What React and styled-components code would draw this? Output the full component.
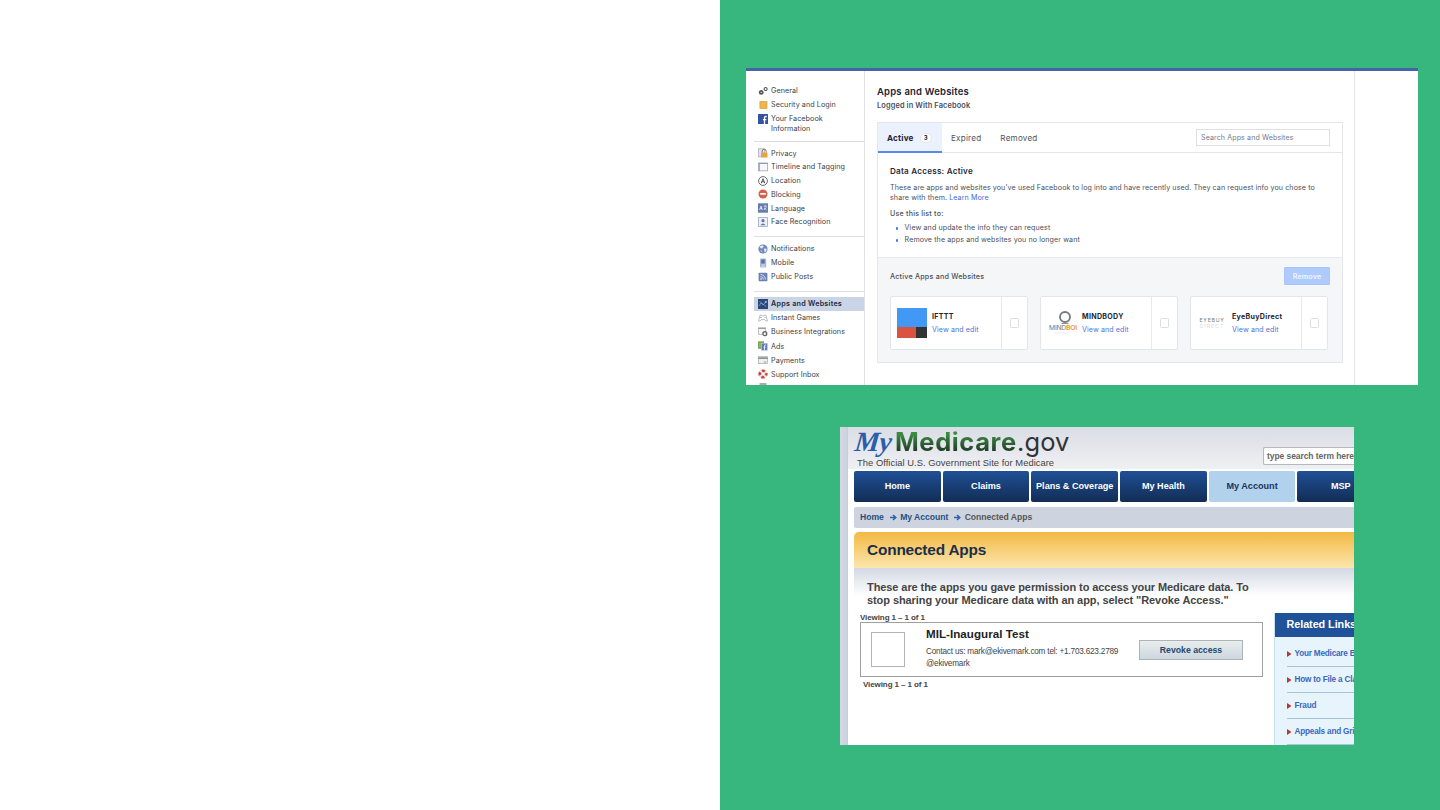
import React from 'react';
import styled, { createGlobalStyle, css } from 'styled-components';

const Global = createGlobalStyle`
  *, *::before, *::after { box-sizing: border-box; }
  body { margin: 0; background: #fff; }
`;

const Slide = styled.main`
  display: grid;
  grid-template-columns: 720px 720px;
  height: 810px;
  overflow: hidden;
`;
const Blank = styled.section`background: #fff;`;
const Showcase = styled.section`
  background: #37b67e;
  padding-top: 68px;
  display: flex;
  flex-direction: column;
  gap: 42px;
`;

/* Social network settings */
const Settings = styled.article`
  width: 672px;
  height: 317px;
  margin-left: 26px;
  background: #fff;
  border-top: 3.5px solid #4463a8;
  display: grid;
  grid-template-columns: 119px 490px 1fr;
  overflow: hidden;
  font-family: Inter, sans-serif;
  color: #3a3f49;
`;
const Sidebar = styled.nav`
  padding: 13px 0 0 8px;
  border-right: 1px solid #e0e1e5;
  height: 314px;
  overflow: hidden;
`;
const Group = styled.ul`
  list-style: none;
  margin: 0;
  padding: 0 0 ${p => p.$after || 0}px;
  & + & { border-top: 1px solid #dcdee2; padding-top: ${p => p.$before || 5}px; }
`;
const Item = styled.li`
  display: flex;
  align-items: flex-start;
  gap: 3px;
  height: ${p => p.$h || 14}px;
  padding-left: 4px;
  font-size: 7.2px;
  line-height: 14px;
  letter-spacing: ${p => (p.$on ? 0.24 : 0.06)}px;
  white-space: pre-line;
  font-weight: ${p => (p.$on ? 600 : 400)};
  background: ${p => (p.$on ? '#c9d4e7' : 'transparent')};
  color: ${p => (p.$on ? '#1d2939' : '#3a3f49')};
  svg { width: 10px; height: 10px; flex: none; margin-top: 1.5px; }
`;
const ItemLabel = styled.span`
  line-height: ${p => (p.$two ? 10 : 14)}px;
  padding-top: ${p => (p.$two ? 2 : 0)}px;
`;
const Content = styled.div`
  border-right: 1px solid #e4e5e9;
  padding: 14px 11px 0 12px;
`;
const Title = styled.h1`
  margin: 0;
  font-size: 9.5px;
  line-height: 14px;
  font-weight: 600;
  letter-spacing: 0.2px;
  color: #1d2233;
`;
const Subtitle = styled.p`
  margin: 0 0 10px;
  font-size: 7.4px;
  line-height: 13px;
  font-weight: 600;
  letter-spacing: 0.12px;
  color: #4b4f5c;
`;
const Card = styled.section`
  width: 466px;
  height: 241px;
  border: 1px solid #e4e6ea;
  display: flex;
  flex-direction: column;
`;
const Tabs = styled.header`
  display: flex;
  align-items: center;
  height: 30px;
  border-bottom: 1px solid #e4e6ea;
  padding-right: 12px;
`;
const Tab = styled.div`
  display: flex;
  align-items: center;
  gap: 6px;
  height: 30px;
  font-size: 8.1px;
  color: #50545f;
  margin-left: ${p => p.$ml || 0}px;
  letter-spacing: 0.22px;
  ${p => p.$on && css`
    width: 64px;
    padding: 2px 0 0 9px;
    background: #ebf1fe;
    border-bottom: 2px solid #5b8ae6;
    font-weight: 700;
    color: #1d2233;
  `}
`;
const Count = styled.span`
  width: 12px;
  height: 10px;
  border-radius: 5px;
  background: #fff;
  border: 1px solid #e6e6e6;
  font-size: 6px;
  line-height: 8px;
  text-align: center;
  letter-spacing: 0;
`;
const Search = styled.div`
  width: 134px;
  height: 17px;
  margin-left: auto;
  border: 1px solid #dedfe3;
  padding-left: 4px;
  font-size: 7.1px;
  line-height: 15px;
  letter-spacing: 0.1px;
  color: #747b87;
`;
const Access = styled.div`
  height: 104px;
  padding: 12px 12px 0;
  font-size: 7.1px;
  letter-spacing: 0.1px;
  color: #4b4f5a;
`;
const AccessTitle = styled.h2`
  margin: 0 0 6px;
  font-size: 8.1px;
  line-height: 12px;
  font-weight: 600;
  letter-spacing: 0.24px;
  color: #252936;
`;
const Copy = styled.p`
  margin: 0 0 ${p => p.$after}px;
  line-height: 10px;
  white-space: nowrap;
  font-weight: ${p => p.$w || 400};
  letter-spacing: ${p => p.$ls}px;
`;
const Link = styled.a`color: #426bd8;`;
const Bullets = styled.ul`
  margin: 0;
  padding: 0 0 0 14.5px;
  list-style: none;
  line-height: 12.4px;
`;
const Bullet = styled.li`
  display: flex;
  align-items: center;
  &::before {
    content: '';
    width: 2.6px; height: 2.6px;
    border-radius: 1px;
    background: #4377e8;
    margin: 0 6.5px 0 -9px;
  }
`;
const Active = styled.div`
  flex: 1;
  background: #f5f6f8;
  border-top: 1px solid #e6e8ec;
  padding: 9px 12px 0;
`;
const ActiveHead = styled.div`
  display: flex;
  justify-content: space-between;
  align-items: center;
  height: 18px;
  font-size: 7.2px;
  font-weight: 500;
  letter-spacing: 0.19px;
  color: #4b4f5a;
`;
const Remove = styled.button`
  width: 46px;
  height: 18px;
  padding: 0;
  border: 1px solid #a9c5fb;
  border-radius: 1px;
  background: #afcafc;
  color: #f0f5ff;
  font: 600 7.2px Inter, sans-serif;
  letter-spacing: 0.1px;
`;
const Apps = styled.div`
  display: flex;
  gap: 12px;
  margin-top: 11px;
`;
const AppCard = styled.div`
  width: 138px;
  height: 54px;
  border: 1px solid #e3e5e9;
  border-radius: 2px;
  background: #fff;
  display: grid;
  grid-template-columns: 41px 69px 1fr;
`;
const Logo = styled.div`
  padding: 11px 0 0 6px;
  overflow: hidden;
  svg { display: block; }
`;
const AppText = styled.div`
  padding-top: 14px;
  font-size: 7.1px;
  line-height: 12.5px;
  letter-spacing: 0.1px;
  color: #4c74d8;
`;
const AppName = styled.div`
  font-weight: 700;
  color: #252833;
  letter-spacing: 0.3px;
`;
const Tick = styled.div`
  border-left: 1px solid #e8e9ed;
  padding: 21px 0 0 8px;
  &::before {
    content: '';
    display: block;
    width: 9px; height: 10px;
    border: 1px solid #dcdee2;
    border-radius: 1.5px;
  }
`;

/* Medicare page */
const Medicare = styled.article`
  width: 514px;
  height: 318px;
  margin-left: 120px;
  padding-left: 8px;
  background: linear-gradient(90deg, #d3d8e2 0, #cdd3df 6px, #c5cbd9 8px, #fff 8px);
  overflow: hidden;
  font-family: "Liberation Sans", Arial, sans-serif;
  color: #444;
`;
const Banner = styled.header`
  display: flex;
  justify-content: space-between;
  height: 42px;
  padding-left: 7px;
  background: linear-gradient(#dadde4, #eff0f4);
`;
const Brand = styled.div`white-space: nowrap;`;
const Wordmark = styled.div`
  display: flex;
  height: 29px;
  line-height: 30px;
  font-family: Inter, sans-serif;
  font-size: 25.5px;
`;
const My = styled.span`
  width: 40px;
  font-family: "Liberation Serif", serif;
  font-style: italic;
  font-weight: 700;
  font-size: 28px;
  letter-spacing: -0.5px;
  color: #2a5ea8;
  transform: skewX(-6deg);
`;
const Green = styled.span`
  width: 122px;
  font-weight: 700;
  letter-spacing: 0.6px;
  background: linear-gradient(#3d8a42 25%, #213a28 85%);
  background-clip: text;
  color: transparent;
`;
const Gov = styled.span`color: #333; letter-spacing: 0.1px;`;
const Tagline = styled.div`
  padding-left: 2px;
  font-size: 9.4px;
  line-height: 13px;
  letter-spacing: 0.03px;
`;
const Query = styled.div`
  width: 91px;
  height: 18px;
  margin-top: 20px;
  border: 1px solid #b6b8bd;
  border-right: 0;
  border-radius: 2px 0 0 2px;
  background: #fff;
  padding-left: 3px;
  font: 700 8.5px/16px "Liberation Sans", sans-serif;
  letter-spacing: -0.07px;
  color: #666;
  white-space: nowrap;
`;
const Menu = styled.nav`
  display: flex;
  gap: 2px;
  padding: 2px 0 0 6px;
`;
const MenuItem = styled.div`
  flex: 0 0 86.7px;
  height: 31px;
  border-radius: 2px;
  background: ${p => (p.$on ? '#b2d1ec' : 'linear-gradient(#205096, #122d55)')};
  color: ${p => (p.$on ? '#1a355c' : '#fff')};
  font-size: 9.1px;
  line-height: 31px;
  font-weight: 700;
  text-align: center;
  white-space: nowrap;
`;
const Crumbs = styled.div`
  display: flex;
  align-items: center;
  height: 21px;
  margin: 5px 0 4px 6px;
  padding: 0 0 1px 6px;
  border-radius: 2px 0 0 2px;
  background: #ced4df;
  font-size: 8.6px;
  letter-spacing: -0.03px;
  font-weight: 700;
  color: #555;
  svg { margin: 1px 3.4px 0 6px; }
`;
const Crumb = styled.span`color: #25507f;`;
const Heading = styled.h2`
  margin: 0 0 0 6px;
  height: 36px;
  padding-left: 13px;
  border-radius: 5px 0 0 0;
  background: linear-gradient(#f4b942, #fbe6ae);
  font-size: 15.4px;
  line-height: 36px;
  letter-spacing: -0.18px;
  color: #1a2f4c;
`;
const Columns = styled.div`
  display: flex;
  margin-left: 6px;
  height: 178px;
  background: linear-gradient(#d3d8e3, #fff 28px);
`;
const Left = styled.div`
  width: 419.5px;
  flex: none;
  padding: 13px 0 0 6px;
`;
const Intro = styled.p`
  margin: 0 0 6px 7px;
  font-size: 11px;
  font-weight: 700;
  line-height: 13px;
  white-space: pre;
  letter-spacing: -0.08px;
`;
const Viewing = styled.div`
  font-size: 8px;
  font-weight: 700;
  line-height: 9px;
  letter-spacing: -0.09px;
  margin: ${p => p.$m || 0};
`;
const Entry = styled.div`
  display: flex;
  width: 402.5px;
  height: 55px;
  border: 1px solid #a0a0a0;
`;
const Thumb = styled.div`
  width: 34px;
  height: 35px;
  margin: 9px 21px 0 10px;
  border: 1px solid #b4b4b4;
`;
const Details = styled.div`
  width: 213px;
  padding-top: 4px;
  font-size: 8.2px;
  line-height: 12px;
  letter-spacing: -0.2px;
  white-space: nowrap;
`;
const EntryTitle = styled.h3`
  margin: 0 0 5px;
  font-size: 11.6px;
  line-height: 14px;
  letter-spacing: 0.04px;
  color: #222;
`;
const Revoke = styled.button`
  width: 104px;
  height: 20px;
  margin-top: 17px;
  padding: 0;
  border: 1px solid #adb3b8;
  background: linear-gradient(#e9eeeb, #ccd7e0);
  font: 700 8.7px "Liberation Sans", sans-serif;
  color: #23486d;
`;
const Related = styled.aside`
  flex: 1;
  margin-top: 45px;
  background: #e8f4fb;
  border-left: 1px solid #c8dfee;
  overflow: hidden;
  white-space: nowrap;
`;
const RelatedTitle = styled.h4`
  margin: 0 0 4px -1px;
  height: 24px;
  padding-left: 13px;
  background: #1f5299;
  color: #fff;
  font-size: 10.8px;
  line-height: 23px;
  letter-spacing: -0.05px;
`;
const RelatedLink = styled.div`
  display: flex;
  align-items: center;
  gap: 3px;
  height: 26px;
  margin-left: 12px;
  border-bottom: 1px solid #a9c4da;
  font-size: 8.2px;
  letter-spacing: -0.2px;
  font-weight: 700;
  color: #3a67bd;
  svg { flex: none; }
`;

const icons = {
  gears: <g fill="none" stroke="#555" strokeWidth="1.8"><circle cx="3.2" cy="6.4" r="1.5" /><circle cx="7.6" cy="3" r="1.5" strokeWidth="1.2" /></g>,
  badge: <g><rect x="1.4" y="1" width="8" height="8" rx="1.2" fill="#e9ae42" /><path d="M3 3.2h5M3 5h4M3 7h5" stroke="#f2c46e" strokeWidth=".8" /></g>,
  fb: <g><rect width="10" height="10" rx=".6" fill="#3153a0" /><path d="M8.7 2.5H7.8Q6.5 2.5 6.5 3.8V10M4.9 5.6h3.5" stroke="#fff" strokeWidth="1.3" fill="none" /></g>,
  lock: <g><rect x=".5" y=".8" width="6" height="8" fill="#dfe4ef" stroke="#9aa6c2" strokeWidth=".7" /><path d="M4.2 4.8V3.3a2 2 0 0 1 4 0v1.5" fill="none" stroke="#8a7650" /><rect x="3" y="4.5" width="6.5" height="5" rx=".6" fill="#e8a640" /></g>,
  calendar: <g><rect x=".6" y="1" width="9" height="7.8" fill="#f7f8fc" stroke="#a0a6bd" strokeWidth=".8" /><path d="M.5 1.5h9M1.3 1v8" stroke="#8590b5" strokeWidth=".9" /></g>,
  location: <g fill="none" stroke="#444"><circle cx="5" cy="5" r="4.4" strokeWidth=".8" /><path d="M3.2 7.3 5 2.7l1.8 4.6M3.8 5.8h2.4" strokeWidth=".9" /></g>,
  block: <g><circle cx="5" cy="5" r="4.5" fill="#d7604d" /><rect x="2.3" y="4" width="5.4" height="1.7" fill="#fff" /></g>,
  lang: <g><rect y=".3" width="10" height="9.4" fill="#667bb0" /><path d="M1.5 7 3 3l1.3 4M2 5.7h2M5.8 3h3M7.3 3v1M5.8 7l2.6-2.7M6 4.7 8.7 7" stroke="#fff" strokeWidth=".7" fill="none" /></g>,
  face: <g><rect x=".5" y=".5" width="9" height="9" fill="#edf0f7" stroke="#9aabcf" strokeWidth=".8" /><circle cx="5" cy="3.7" r="1.6" fill="#6279ad" /><path d="M2.3 8.2Q5 4.8 7.7 8.2z" fill="#6279ad" /></g>,
  globe: <g><circle cx="5" cy="5" r="4.6" fill="#6e87bd" /><path d="M1.3 2.4 4.7 1.3 5.8 2.5 4.1 4.5 2.7 4.3zM5.8 4.5l3 .3-.7 2.6-1.5 1.1zM2.2 6l1.8.8.2 1.8z" fill="#dfe7f5" /></g>,
  phone: <g><rect x="2" y=".4" width="6.2" height="9.2" rx="1" fill="#a9b6d1" /><rect x="3.3" y="1.5" width="3.4" height="4" fill="#5472b0" /><path d="M3.4 7h3.4M3.4 8.4h3.4" stroke="#e7ebf3" strokeWidth=".6" /></g>,
  rss: <g><rect x=".6" y=".8" width="8.8" height="8.4" rx=".8" fill="#6c80b4" /><circle cx="3" cy="7" r=".8" fill="#fff" /><path d="M2.4 4.6a3 3 0 0 1 3 3M2.4 2.5a5 5 0 0 1 5 5" fill="none" stroke="#e8ecf6" strokeWidth=".8" /></g>,
  apps: <g><rect width="10" height="10" fill="#2c4778" /><path d="m.8 7 2.3-3 2 2L9 2M1.5 2.5l6.8 5" stroke="#8ea9d4" strokeWidth=".7" fill="none" /><circle cx="7.7" cy="3" r="1" fill="#9dbae9" /></g>,
  games: <g fill="none" stroke="#a1a3a7" strokeWidth=".7"><path d="M2 2.2h1.7l.5.7h1.6l.5-.7H8L9.4 8H8L6.4 6.5H3.6L2 8H.6z" /><path d="M2.2 4.5h1.6M3 3.7v1.6M6.4 4.5h1.4" /></g>,
  business: <g><rect x=".5" y=".8" width="7.2" height="6.7" fill="#f5f6f8" stroke="#aaa" strokeWidth=".7" /><path d="M.5 1.4h7.2" stroke="#8c94a6" /><circle cx="6.8" cy="6.7" r="1.9" fill="#fff" stroke="#666" strokeWidth="1.4" /></g>,
  ads: <g><rect x="0" y=".3" width="6" height="7.5" fill="#7ba55d" /><path d="M1 3h2M1 5h2" stroke="#a9c795" strokeWidth=".8" /><rect x="3.3" y="2.2" width="6.2" height="7.2" fill="#617bb5" stroke="#d5ddec" strokeWidth=".5" /><path d="M8 4H7.3Q6.5 4 6.5 5v4M5.5 6.2h2" fill="none" stroke="#fff" strokeWidth=".8" /></g>,
  card: <g><rect x=".5" y="1.7" width="9" height="6.8" fill="#eef0ef" stroke="#a4a7a6" strokeWidth=".7" /><path d="M.5 3.1h9" stroke="#666" strokeWidth="1.2" /><path d="M5.8 7h2.5" stroke="#96a684" /></g>,
  support: <g fill="none"><circle cx="5" cy="5" r="3.2" stroke="#e6e3e3" strokeWidth="2.8" /><circle cx="5" cy="5" r="3.2" stroke="#cf463c" strokeWidth="2.8" strokeDasharray="3 2.03" strokeDashoffset="1.5" /></g>,
  video: <rect x="1.5" width="7" height="6" fill="#aaa" />,
};
const Icon = ({ name }) => <svg viewBox="0 0 10 10">{icons[name]}</svg>;

const groups = [
  { after: 4.5, items: [['gears', 'General'], ['badge', 'Security and Login'], ['fb', 'Your Facebook\nInformation', 24]] },
  { after: 7, before: 5.5, items: [['lock', 'Privacy'], ['calendar', 'Timeline and Tagging'], ['location', 'Location'], ['block', 'Blocking'], ['lang', 'Language'], ['face', 'Face Recognition']].map(i => [...i, 13.8]) },
  { after: 7, items: [['globe', 'Notifications'], ['phone', 'Mobile'], ['rss', 'Public Posts']] },
  { items: [['apps', 'Apps and Websites'], ['games', 'Instant Games'], ['business', 'Business Integrations'], ['ads', 'Ads'], ['card', 'Payments'], ['support', 'Support Inbox'], ['video', '']].map(i => [...i, 14.1]) },
];

const Ifttt = () => (
  <svg width="30" height="30"><path fill="#4299f5" d="M0 0h30v19H0z" /><path fill="#db5240" d="M0 19h18.5v11H0z" /><path fill="#333" d="M18.5 19H30v11H18.5z" /></svg>
);
const Mindbody = () => (
  <svg width="32" height="30" viewBox="0 0 32 30">
    <circle cx="18" cy="9" r="5" fill="none" stroke="#777b80" strokeWidth="1.9" />
    <path d="M14.5 15.5h7" stroke="#8d9094" strokeWidth="1" />
    <text x="2" y="22" fontFamily="Inter, sans-serif" fontSize="6.8" letterSpacing="-.25" fill="#777">MIND<tspan fill="#eb962f" fontWeight="600">BOI</tspan></text>
    <path d="M7 25h14" stroke="#ddd" strokeWidth=".6" />
  </svg>
);
const EyeBuy = () => (
  <svg width="32" height="30" viewBox="0 0 32 30" fontFamily="Inter, sans-serif" fontSize="5.2">
    <text x="2.5" y="14.3" letterSpacing=".75" fill="#777">EYEBUY</text>
    <text x="2.5" y="19.5" letterSpacing="1" fill="#ddd">DIRECT</text>
  </svg>
);
const apps = [['IFTTT', Ifttt], ['MINDBODY', Mindbody], ['EyeBuyDirect', EyeBuy]];

const Arrow = () => (
  <svg width="7" height="7" viewBox="0 0 7 7"><path d="M0 3.5h5M3 1l2.8 2.5L3 6" fill="none" stroke="#2863ab" strokeWidth="1.5" /></svg>
);

export default function App() {
  return (
    <>
      <Global />
      <Slide>
        <Blank />
        <Showcase>
          <Settings>
            <Sidebar>
              {groups.map((g, n) => (
                <Group key={n} $after={g.after} $before={g.before}>
                  {g.items.map(([icon, label, h]) => (
                    <Item key={icon} $h={h} $on={icon === 'apps'}>
                      <Icon name={icon} />
                      <ItemLabel $two={icon === 'fb'}>{label}</ItemLabel>
                    </Item>
                  ))}
                </Group>
              ))}
            </Sidebar>
            <Content>
              <Title>Apps and Websites</Title>
              <Subtitle>Logged in With Facebook</Subtitle>
              <Card>
                <Tabs>
                  <Tab $on>Active<Count>3</Count></Tab>
                  <Tab $ml={9}>Expired</Tab>
                  <Tab $ml={19}>Removed</Tab>
                  <Search>Search Apps and Websites</Search>
                </Tabs>
                <Access>
                  <AccessTitle>Data Access: Active</AccessTitle>
                  <Copy $after={6} $ls={0.096}>
                    These are apps and websites you've used Facebook to log into and have recently used. They can request info you chose to<br />
                    share with them. <Link>Learn More</Link>
                  </Copy>
                  <Copy $after={3} $w={500} $ls={0.22}>Use this list to:</Copy>
                  <Bullets>
                    <Bullet>View and update the info they can request</Bullet>
                    <Bullet>Remove the apps and websites you no longer want</Bullet>
                  </Bullets>
                </Access>
                <Active>
                  <ActiveHead>Active Apps and Websites<Remove>Remove</Remove></ActiveHead>
                  <Apps>
                    {apps.map(([name, Mark]) => (
                      <AppCard key={name}>
                        <Logo><Mark /></Logo>
                        <AppText><AppName>{name}</AppName>View and edit</AppText>
                        <Tick />
                      </AppCard>
                    ))}
                  </Apps>
                </Active>
              </Card>
            </Content>
          </Settings>

          <Medicare>
            <Banner>
              <Brand>
                <Wordmark><My>My</My><Green>Medicare</Green><Gov>.gov</Gov></Wordmark>
                <Tagline>The Official U.S. Government Site for Medicare</Tagline>
              </Brand>
              <Query>type search term here</Query>
            </Banner>
            <Menu>
              {['Home', 'Claims', 'Plans & Coverage', 'My Health', 'My Account', 'MSP'].map(m => (
                <MenuItem key={m} $on={m === 'My Account'}>{m}</MenuItem>
              ))}
            </Menu>
            <Crumbs>
              <Crumb>Home</Crumb><Arrow /><Crumb>My Account</Crumb><Arrow />Connected Apps
            </Crumbs>
            <Heading>Connected Apps</Heading>
            <Columns>
              <Left>
                <Intro>{'These are the apps you gave permission to access your Medicare data. To\nstop sharing your Medicare data with an app, select "Revoke Access."'}</Intro>
                <Viewing>Viewing 1 – 1 of 1</Viewing>
                <Entry>
                  <Thumb />
                  <Details>
                    <EntryTitle>MIL-Inaugural Test</EntryTitle>
                    Contact us: mark@ekivemark.com tel: +1.703.623.2789<br />@ekivemark
                  </Details>
                  <Revoke>Revoke access</Revoke>
                </Entry>
                <Viewing $m="3px 0 0 3px">Viewing 1 – 1 of 1</Viewing>
              </Left>
              <Related>
                <RelatedTitle>Related Links</RelatedTitle>
                {['Your Medicare B', 'How to File a Cla', 'Fraud', 'Appeals and Gri'].map(l => (
                  <RelatedLink key={l}>
                    <svg width="5" height="6"><path d="M0 0 4.5 3 0 6z" fill="#b13a32" /></svg>{l}
                  </RelatedLink>
                ))}
              </Related>
            </Columns>
          </Medicare>
        </Showcase>
      </Slide>
    </>
  );
}
